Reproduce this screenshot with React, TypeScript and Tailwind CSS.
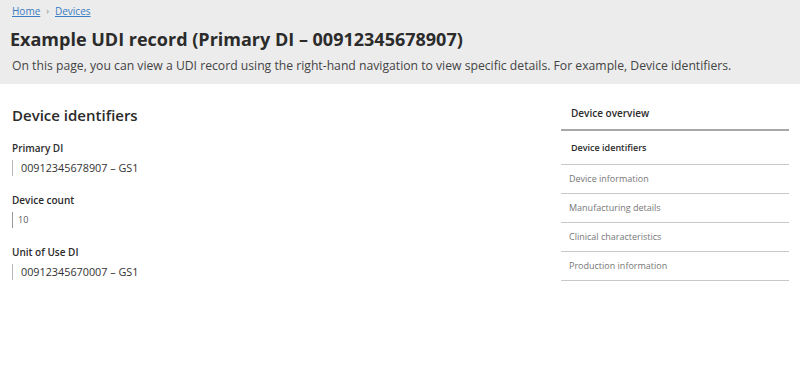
import React from "react";

const navItems = [
  "Device information",
  "Manufacturing details",
  "Clinical characteristics",
  "Production information",
];

export default function App() {
  return (
    <div className="w-[800px] h-[366px] bg-white text-[#333]" style={{ fontFamily: '"Open Sans", "Noto Sans", sans-serif' }}>
      <header className="bg-[#ececec] h-[84px] px-[12px] pt-[4px]">
        <nav className="flex items-center gap-[6px] text-[10px] leading-[14px]">
          <a className="text-[#3a7dc4] underline">Home</a>
          <span className="text-[#888] text-[9px]">›</span>
          <a className="text-[#3a7dc4] underline">Devices</a>
        </nav>
        <h1 className="ml-[-2px] mt-[9px] text-[18px] leading-[24px] font-bold text-[#2b2b2b]">
          Example UDI record (Primary DI – 00912345678907)
        </h1>
        <p className="mt-[7px] text-[12.2px] leading-[16px] text-[#444]">
          On this page, you can view a UDI record using the right-hand navigation to view specific details. For example, Device identifiers.
        </p>
      </header>
      <main className="flex pl-[12px] pr-[11px] pt-[20px]">
        <section className="flex-1">
          <h2 className="text-[15px] leading-[22px] font-semibold text-[#2b2b2b]">Device identifiers</h2>
          <dl className="mt-[15px]">
            <dt className="text-[10px] leading-[14px] font-semibold text-[#2b2b2b]">Primary DI</dt>
            <dd className="mt-[5px] border-l border-[#bbb] pl-[8px] text-[10.8px] leading-[16px] text-[#333]">00912345678907 – GS1</dd>
            <dt className="mt-[17px] text-[10px] leading-[14px] font-semibold text-[#2b2b2b]">Device count</dt>
            <dd className="mt-[5px] border-l border-[#999] pl-[5px] text-[9px] leading-[16px] text-[#555]">10</dd>
            <dt className="mt-[17px] text-[10px] leading-[14px] font-semibold text-[#2b2b2b]">Unit of Use DI</dt>
            <dd className="mt-[5px] border-l border-[#bbb] pl-[8px] text-[10.8px] leading-[16px] text-[#333]">00912345670007 – GS1</dd>
          </dl>
        </section>
        <aside className="w-[228px] mt-[-20px]">
          <div className="h-[47px] flex items-center pl-[10px] pt-[14px] text-[10px] font-semibold text-[#2b2b2b] border-b-2 border-[#a8a8a8]">
            Device overview
          </div>
          <div className="h-[34px] flex items-center pl-[10px] text-[9px] font-semibold text-[#2b2b2b] border-b border-[#c8c8c8]">
            Device identifiers
          </div>
          {navItems.map((t) => (
            <div key={t} className="h-[29px] flex items-center pl-[8px] text-[9px] text-[#777] border-b border-[#c8c8c8]">
              {t}
            </div>
          ))}
        </aside>
      </main>
    </div>
  );
}
